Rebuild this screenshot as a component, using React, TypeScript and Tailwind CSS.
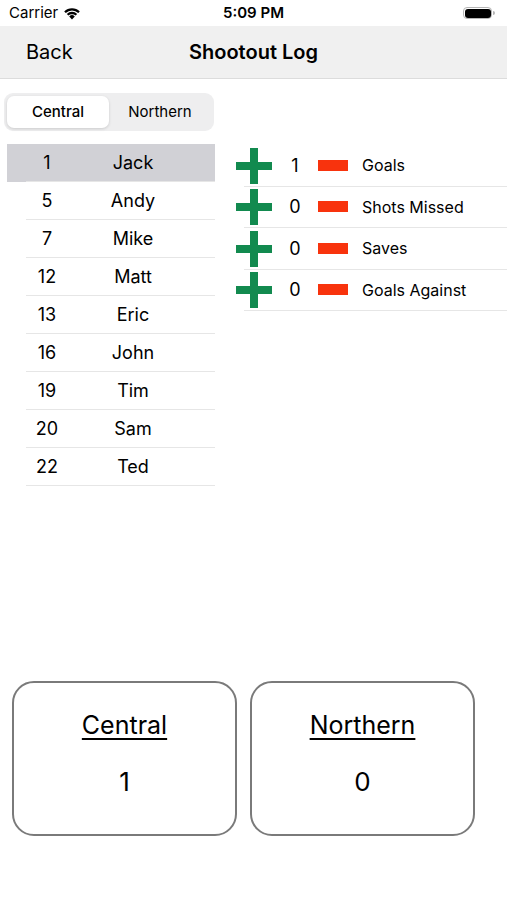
const players = [
  { num: 1, name: 'Jack' },
  { num: 5, name: 'Andy' },
  { num: 7, name: 'Mike' },
  { num: 12, name: 'Matt' },
  { num: 13, name: 'Eric' },
  { num: 16, name: 'John' },
  { num: 19, name: 'Tim' },
  { num: 20, name: 'Sam' },
  { num: 22, name: 'Ted' },
];

const stats = [
  { value: 1, label: 'Goals' },
  { value: 0, label: 'Shots Missed' },
  { value: 0, label: 'Saves' },
  { value: 0, label: 'Goals Against' },
];

function Plus() {
  return (
    <div className="relative h-[36px] w-[36px] shrink-0">
      <div className="absolute left-[14px] top-0 h-[36px] w-[8px] bg-[#128a4f]" />
      <div className="absolute left-0 top-[14px] h-[8px] w-[36px] bg-[#128a4f]" />
    </div>
  );
}

function ScoreBox({ team, score }: { team: string; score: number }) {
  return (
    <div className="flex h-[155px] w-[225px] flex-col items-center rounded-[22px] border-2 border-[#7a7a7a] pt-[26px]">
      <div className="text-[25px] leading-[32px] text-black underline underline-offset-[4px] decoration-[1.5px]">{team}</div>
      <div className="mt-[25px] text-[26px] leading-[32px] text-black">{score}</div>
    </div>
  );
}

export default function App() {
  return (
    <div
      className="relative h-[900px] w-[507px] overflow-hidden bg-white text-black"
      style={{ fontFamily: 'Inter, "Liberation Sans", sans-serif' }}
    >
      {/* status bar */}
      <div className="flex h-[26px] items-center justify-between px-[9px]">
        <div className="flex w-[120px] items-center gap-[5px] text-[15px]">
          <span>Carrier</span>
          <svg width="18" height="13" viewBox="0 0 18 13">
            <path d="M9 12.5 L6.2 9.4 A4 4 0 0 1 11.8 9.4 Z" fill="#000" />
            <path d="M3.8 7 A7.4 7.4 0 0 1 14.2 7 L12.6 8.6 A5.2 5.2 0 0 0 5.4 8.6 Z" fill="#000" />
            <path d="M1.2 4.4 A11 11 0 0 1 16.8 4.4 L15.2 6 A8.8 8.8 0 0 0 2.8 6 Z" fill="#000" />
          </svg>
        </div>
        <div className="text-[15px] font-semibold">5:09 PM</div>
        <div className="flex w-[120px] items-center justify-end pr-[3px]">
          <div className="flex h-[12px] w-[29px] items-center justify-center rounded-[4px] border border-[#b5b5b5]">
            <div className="h-[9px] w-[26px] rounded-[3px] bg-black" />
          </div>
          <div className="ml-[1px] h-[4px] w-[2px] rounded-r-sm bg-[#b5b5b5]" />
        </div>
      </div>

      {/* nav bar */}
      <div className="relative flex h-[53px] items-center border-b border-[#dcdcdc] bg-[#f0f0f0]">
        <span className="pl-[26px] text-[20px]">Back</span>
        <span className="absolute left-1/2 -translate-x-1/2 text-[20px] font-semibold">Shootout Log</span>
      </div>

      <div className="flex pt-[14px]">
        {/* left column */}
        <div className="w-[215px] shrink-0">
          <div className="ml-[4px] flex h-[38px] w-[210px] rounded-[9px] bg-[#eeeeef] p-[3px]">
            <div className="flex flex-1 items-center justify-center rounded-[7px] bg-white text-[15px] font-medium shadow-[0_1px_3px_rgba(0,0,0,0.15)]">
              Central
            </div>
            <div className="flex flex-1 items-center justify-center text-[15px]">Northern</div>
          </div>

          <div className="mt-[13px] ml-[7px]">
            {players.map((p, i) => (
              <div key={p.num} className={i === 0 ? 'bg-[#d1d1d6]' : ''}>
                <div className="ml-[19px] flex h-[38px] items-center border-b border-[#e6e6e6] text-[18px]">
                  <span className="w-[42px] text-center">{p.num}</span>
                  <span className="flex-1 pr-[17px] text-center">{p.name}</span>
                </div>
              </div>
            ))}
          </div>
        </div>

        {/* right column */}
        <div className="flex-1 pl-[21px] pt-[52px]">
          {stats.map((s) => (
            <div key={s.label} className="flex h-[41.5px] items-center">
              <Plus />
              <div className="flex h-full flex-1 items-center border-b border-[#e6e6e6] -ml-[28px] pl-[28px]">
                <span className="w-[46px] text-center text-[18px]">{s.value}</span>
                <div className="h-[11px] w-[30px] bg-[#f8330d]" />
                <span className="ml-[14px] text-[16px]">{s.label}</span>
              </div>
            </div>
          ))}
        </div>
      </div>

      {/* score boxes */}
      <div className="absolute left-[12px] top-[681px] flex gap-[13px]">
        <ScoreBox team="Central" score={1} />
        <ScoreBox team="Northern" score={0} />
      </div>
    </div>
  );
}
